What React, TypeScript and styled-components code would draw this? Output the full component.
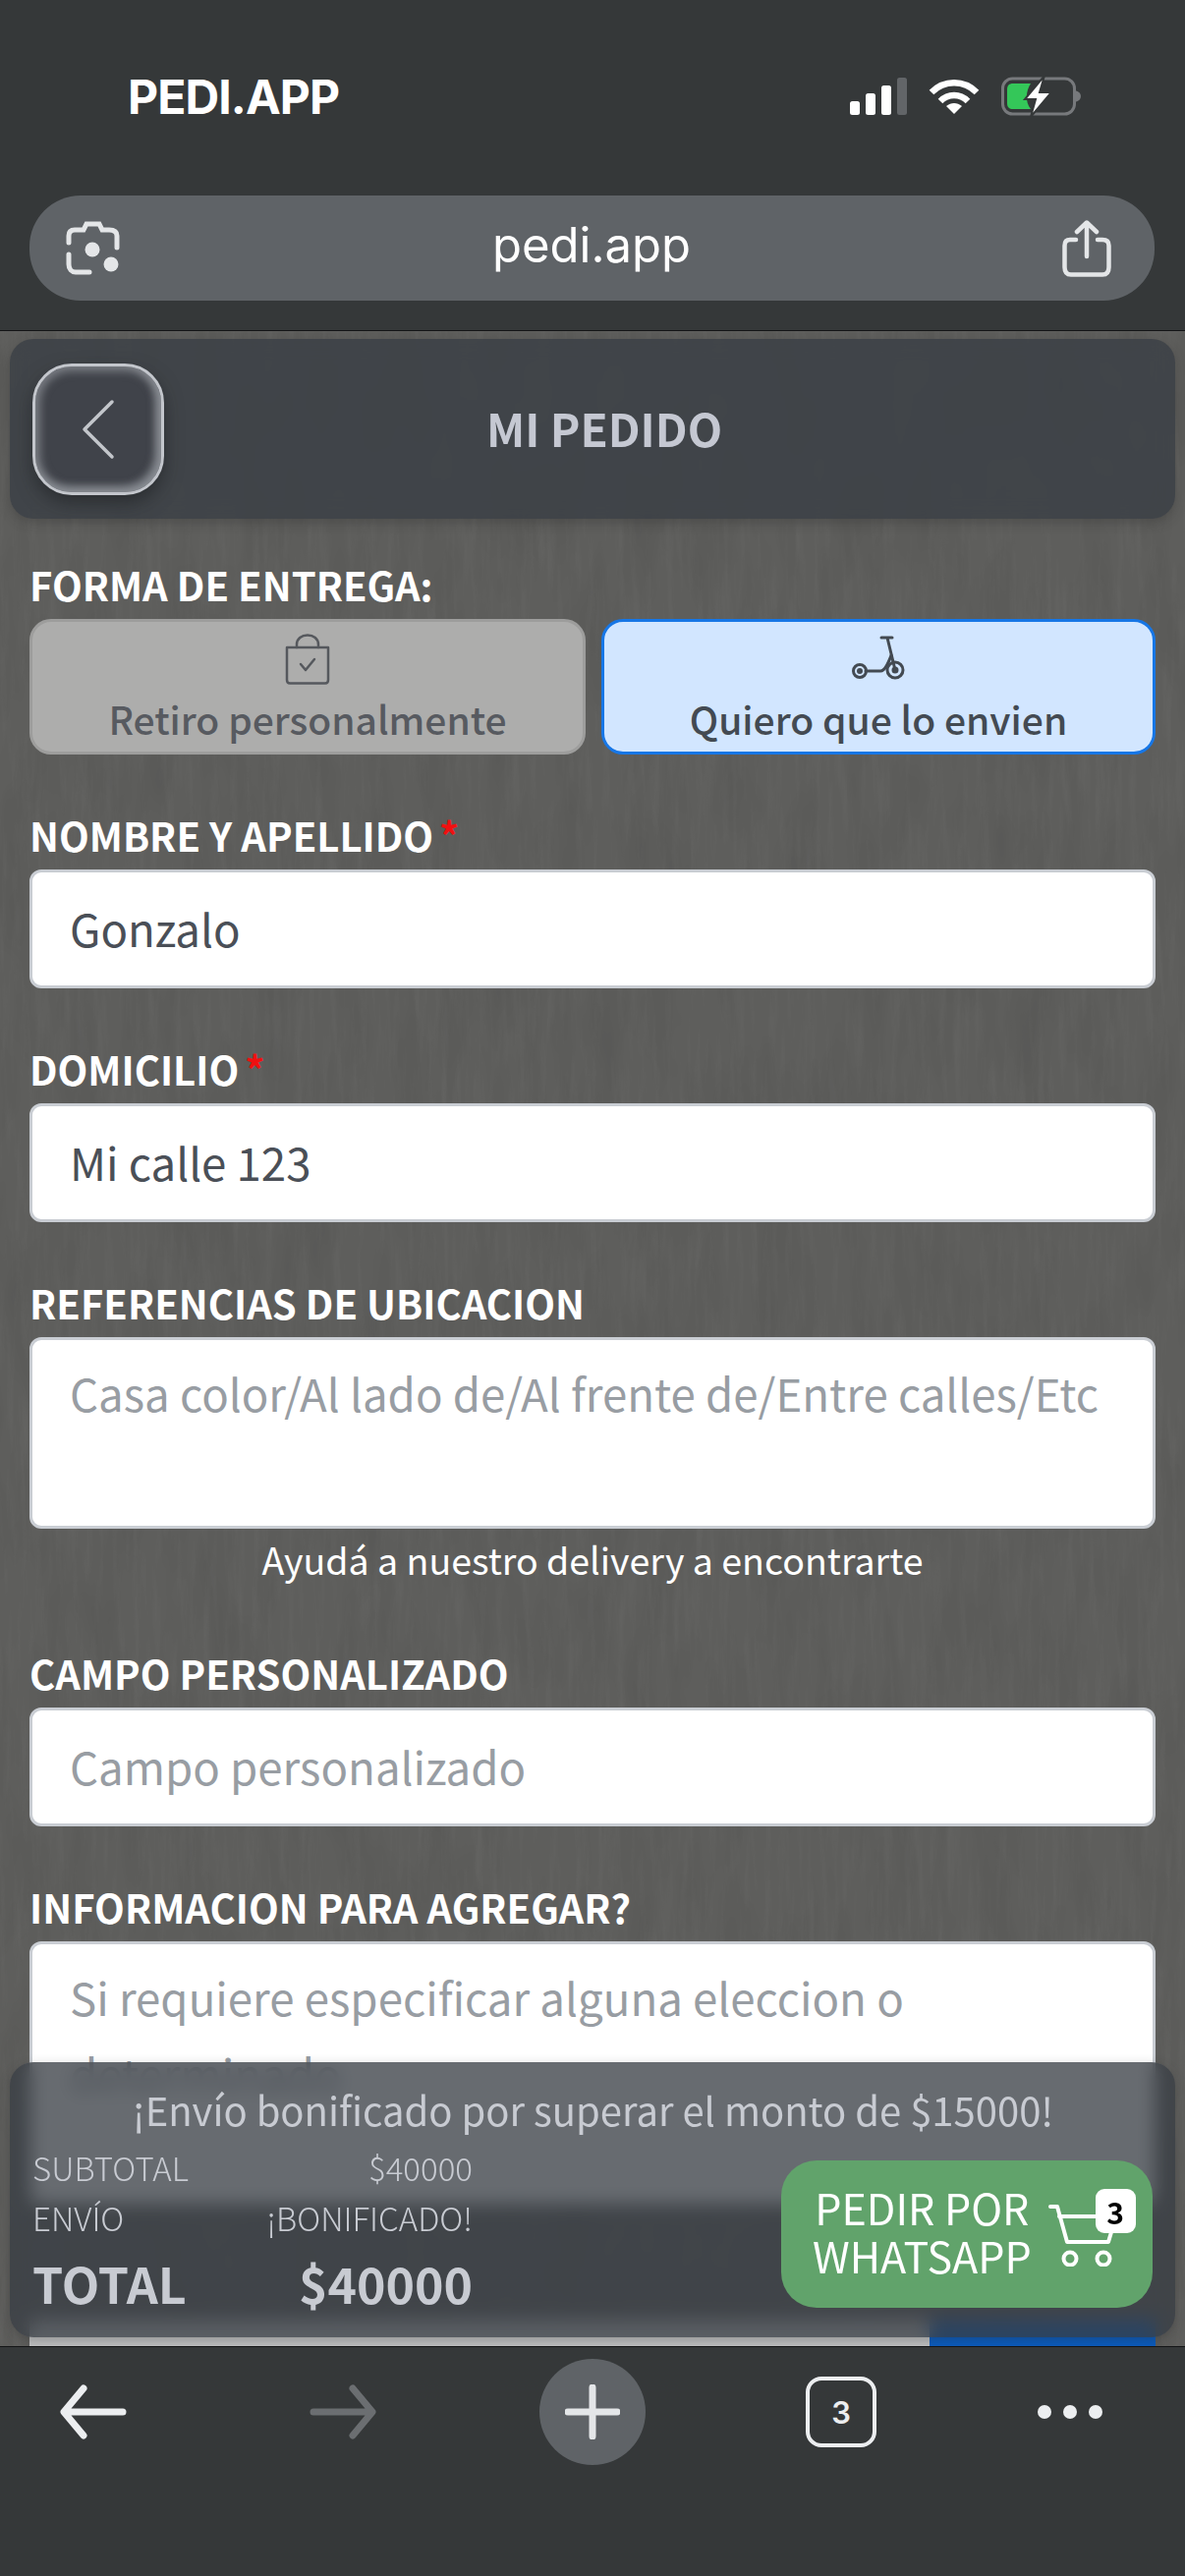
import styled, { createGlobalStyle } from 'styled-components';

const sans = `"Noto Sans CJK SC", "Noto Sans", sans-serif`;
const system = `Inter, "Liberation Sans", sans-serif`;

const GlobalStyle = createGlobalStyle`
  html, body {
    margin: 0;
    padding: 0;
    background: #353839;
  }
  * {
    box-sizing: border-box;
  }
`;

const Screen = styled.div`
  width: 1206px;
  height: 2622px;
  display: flex;
  flex-direction: column;
  overflow: hidden;
  font-family: ${sans};
  background: #353839;
`;

const TopChrome = styled.header`
  height: 337px;
  flex: none;
  padding: 70px 31px 0 30px;
  background: #353839;
  border-bottom: 1px solid #141516;
`;

const StatusBar = styled.div`
  display: flex;
  align-items: center;
  justify-content: space-between;
  height: 56px;
  padding: 0 72px 0 100px;
  margin-bottom: 73px;
`;

const Carrier = styled.span`
  font-family: ${system};
  font-size: 48px;
  font-weight: 700;
  letter-spacing: -0.9px;
  color: #fff;
`;

const StatusIcons = styled.div`
  display: flex;
  align-items: center;
  gap: 22px;
`;

const AddressBar = styled.div`
  height: 107px;
  display: flex;
  align-items: center;
  justify-content: space-between;
  padding: 0 44px 0 37px;
  border-radius: 52px;
  background: #5f6367;
`;

const Url = styled.span`
  font-family: ${system};
  font-size: 49px;
  font-weight: 400;
  line-height: 100px;
  padding-bottom: 6px;
  color: #fff;
`;

const Main = styled.main`
  position: relative;
  isolation: isolate;
  flex: 1;
  min-height: 0;
  overflow: hidden;
  padding: 8px 10px 0;
  background-color: #5e5e5c;
`;

const Texture = styled.svg`
  position: absolute;
  inset: 0;
  z-index: -1;
  width: 100%;
  height: 100%;
`;

const GlassPanel = styled.div`
  border-radius: 24px;
  background: rgba(55, 60, 67, 0.76);
  backdrop-filter: blur(9px);
  box-shadow: 0 4px 12px rgba(40, 40, 40, 0.3);
`;

const Header = styled(GlassPanel)`
  height: 183px;
  display: flex;
  align-items: center;
  padding-left: 23px;
`;

const BackButton = styled.button`
  width: 134px;
  height: 134px;
  flex: none;
  display: flex;
  align-items: center;
  justify-content: center;
  padding: 0;
  border: 3px solid #c3c6cc;
  border-radius: 40px;
  background: #40434a;
  box-shadow:
    inset 0 0 9px 5px rgba(176, 180, 186, 0.5),
    inset -5px -5px 8px 1px rgba(176, 180, 186, 0.35),
    0 8px 18px rgba(24, 26, 28, 0.5);
`;

const Title = styled.h1`
  flex: 1;
  margin: 0 0 3px;
  padding-right: 133px;
  text-align: center;
  font-size: 46px;
  font-weight: 700;
  color: #c5c8d2;
`;

const Form = styled.form`
  display: flex;
  flex-direction: column;
  gap: 62px;
  margin: 47px 20px 0;
`;

const Field = styled.div`
  display: flex;
  flex-direction: column;
`;

const Label = styled.label`
  height: 44px;
  margin-bottom: 11px;
  font-size: 40px;
  line-height: 41px;
  font-weight: 700;
  color: #fff;
`;

const Required = styled.span`
  margin-left: 6px;
  color: #f01010;
`;

const ToggleRow = styled.div`
  display: grid;
  grid-template-columns: 566px 564px;
  gap: 16px;
`;

const Toggle = styled.button<{ $active?: boolean }>`
  height: 138px;
  display: flex;
  flex-direction: column;
  align-items: center;
  padding: 11px 0 0;
  border-radius: 22px;
  border: ${p => (p.$active ? '3px solid #1676e6' : '3px solid #9d9d9c')};
  background: ${p => (p.$active ? '#d2e6ff' : '#adadac')};
  color: ${p => (p.$active ? '#434a52' : '#575a60')};
  font-family: ${sans};
  font-size: 39px;
  line-height: 50px;
  font-weight: 500;
`;

const ToggleIcon = styled.span<{ $offset: number }>`
  display: block;
  height: 54px;
  margin-bottom: 8px;
  padding-top: ${p => p.$offset}px;
`;

const controlStyles = `
  display: block;
  width: 100%;
  padding: 0 38px;
  border: 3px solid #c9cdd3;
  border-radius: 12px;
  background: #fff;
  color: #4a4f57;
  font-family: ${sans};
  font-size: 45.6px;
  outline: none;
`;

const TextInput = styled.input`
  ${controlStyles}
  height: 121px;
  padding-bottom: 4px;
  &::placeholder {
    color: #989da3;
    opacity: 1;
  }
`;

const TextArea = styled.textarea<{ $tall?: boolean }>`
  ${controlStyles}
  height: ${p => (p.$tall ? '268px' : '195px')};
  padding-top: 14px;
  line-height: 78px;
  resize: none;
  overflow: hidden;
  &::placeholder {
    color: #989da3;
    opacity: 1;
  }
`;

const Hint = styled.p`
  margin: 9px 0 12px;
  text-align: center;
  font-size: 37.5px;
  line-height: 44px;
  color: #fff;
`;

const SubmitRow = styled.div`
  display: grid;
  grid-template-columns: 916px 230px;
  height: 60px;
  margin-top: 55px;
`;

const SubmitPart = styled.div<{ $color: string }>`
  background: ${p => p.$color};
`;

const Summary = styled(GlassPanel)`
  position: absolute;
  left: 10px;
  right: 10px;
  bottom: 9px;
  height: 280px;
  padding: 23px 23px 0 24px;
`;

const Notice = styled.p`
  margin: 0 0 9px;
  text-align: center;
  font-size: 40px;
  line-height: 50px;
  color: #c8cbd2;
`;

const SummaryBody = styled.div`
  display: flex;
  align-items: flex-start;
  justify-content: space-between;
`;

const Totals = styled.div`
  width: 448px;
  margin-left: -1px;
  display: flex;
  flex-direction: column;
`;

const TotalRow = styled.div<{ $strong?: boolean }>`
  display: flex;
  justify-content: space-between;
  height: ${p => (p.$strong ? '74px' : '51px')};
  margin-top: ${p => (p.$strong ? '3px' : '0')};
  font-size: ${p => (p.$strong ? '50px' : '33px')};
  line-height: ${p => (p.$strong ? '74px' : '50px')};
  font-weight: ${p => (p.$strong ? 700 : 300)};
  color: #c8cbd2;
`;

const OrderButton = styled.button`
  width: 378px;
  height: 150px;
  margin-top: 18px;
  display: flex;
  align-items: center;
  gap: 17px;
  padding: 0 0 0 32px;
  border: none;
  border-radius: 36px;
  background: #61a36b;
  color: #fff;
  font-family: ${sans};
  text-align: center;
`;

const OrderText = styled.span`
  margin-top: -6px;
  font-size: 43px;
  line-height: 49px;
  font-weight: 400;
`;

const CartWrap = styled.span`
  position: relative;
  display: block;
  width: 72px;
  height: 64px;
  margin-top: 2px;
`;

const CartBadge = styled.span`
  position: absolute;
  top: -15px;
  right: -17px;
  width: 41px;
  height: 45px;
  display: flex;
  align-items: center;
  justify-content: center;
  border-radius: 9px;
  background: #fff;
  color: #000;
  font-size: 30px;
  font-weight: 700;
`;

const BottomChrome = styled.nav`
  height: 234px;
  flex: none;
  display: grid;
  grid-template-columns: 190px 318px 190px 316px 150px;
  grid-auto-rows: 108px;
  align-items: center;
  justify-items: center;
  padding-top: 12px;
  background: #353839;
  border-top: 1px solid #141516;
`;

const NewTab = styled.span`
  width: 108px;
  height: 108px;
  display: flex;
  align-items: center;
  justify-content: center;
  border-radius: 50%;
  background: #5f6367;
`;

const TabCount = styled.span`
  width: 72px;
  height: 72px;
  display: flex;
  align-items: center;
  justify-content: center;
  border: 4px solid #eceef0;
  border-radius: 16px;
  color: #eceef0;
  font-family: ${system};
  font-size: 31px;
  font-weight: 600;
`;

const ConcreteTexture = () => (
  <Texture aria-hidden="true">
    <defs>
      <filter id="streaks-light" x="0" y="0" width="100%" height="100%">
        <feTurbulence type="fractalNoise" baseFrequency="0.14 0.012" numOctaves="4" seed="7" />
        <feColorMatrix type="matrix" values="0 0 0 0 1  0 0 0 0 1  0 0 0 0 1  1.1 0 0 0 -0.5" />
      </filter>
      <filter id="streaks-dark" x="0" y="0" width="100%" height="100%">
        <feTurbulence type="fractalNoise" baseFrequency="0.03 0.008" numOctaves="3" seed="21" />
        <feColorMatrix type="matrix" values="0 0 0 0 0  0 0 0 0 0  0 0 0 0 0  1.4 0 0 0 -0.6" />
      </filter>
    </defs>
    <rect width="100%" height="100%" filter="url(#streaks-light)" opacity="0.06" />
    <rect width="100%" height="100%" filter="url(#streaks-dark)" opacity="0.08" />
  </Texture>
);

const Signal = () => (
  <svg width="58" height="38" viewBox="0 0 58 38" fill="#fff">
    <rect x="0" y="24" width="10" height="14" rx="2.5" />
    <rect x="16" y="16" width="10" height="22" rx="2.5" />
    <rect x="32" y="8" width="10" height="30" rx="2.5" />
    <rect x="48" y="0" width="10" height="38" rx="2.5" fill="#626568" />
  </svg>
);

const Wifi = () => (
  <svg width="52" height="38" viewBox="0 0 52 38" fill="none" stroke="#fff" strokeWidth="6.5">
    <path d="M3 15 C16 2 36 2 49 15" />
    <path d="M12 24 C20 16 32 16 40 24" />
    <path d="M18 29 L26 37 L34 29 C29 25 23 25 18 29Z" fill="#fff" stroke="none" />
  </svg>
);

const Battery = () => (
  <svg width="84" height="42" viewBox="0 0 84 42">
    <rect x="1.5" y="3" width="73" height="36" rx="10" fill="none" stroke="#77797c" strokeWidth="3" />
    <path d="M75 15 C79 16 81 18 81 21 C81 24 79 26 75 27Z" fill="#77797c" />
    <path d="M6 14 C6 10 8 8 12 8 H30 C25 16 24 26 30 34 H12 C8 34 6 32 6 28Z" fill="#34c759" />
    <path d="M44 0 L24 24 H35 L30 42 L51 17 H39Z" fill="#fff" stroke="#353839" strokeWidth="2" />
  </svg>
);

const LensIcon = () => (
  <svg width="56" height="56" viewBox="0 0 56 56" fill="none" stroke="#e4e6e8" strokeWidth="5" strokeLinecap="round">
    <path d="M3 22 V15 C3 11 5 9 9 9 H18 L21 3 H34 L37 9 H44 C49 9 52 11 52 15 V27" />
    <path d="M3 34 V44 C3 49 6 52 10 52 H24" />
    <circle cx="27" cy="29" r="7.5" fill="#e4e6e8" stroke="none" />
    <circle cx="46" cy="44" r="7.5" fill="#e4e6e8" stroke="none" />
  </svg>
);

const ShareIcon = () => (
  <svg width="50" height="58" viewBox="0 0 50 58" fill="none" stroke="#e4e6e8" strokeWidth="4.5" strokeLinecap="round" strokeLinejoin="round">
    <path d="M14 20 H8 C4 20 2.500 22 2.500 26 V48 C2.500 53 5 55.500 9 55.500 H41 C45 55.500 47.500 53 47.500 48 V26 C47.500 22 45 20 41 20 H36" />
    <path d="M25 37 V3 M15 12 L25 2.500 L35 12" />
  </svg>
);

const Chevron = () => (
  <svg width="34" height="62" viewBox="0 0 34 62" fill="none" stroke="#c3c6cb" strokeWidth="3.500" strokeLinecap="round" strokeLinejoin="round">
    <path d="M31 3 L3 31 L31 59" />
  </svg>
);

const BagIcon = () => (
  <svg width="46" height="52" viewBox="0 0 46 52" fill="none" stroke="#55585d" strokeWidth="2.500" strokeLinejoin="round" strokeLinecap="round">
    <path d="M2 14 H44 V47 C44 49.500 43 50.500 41 50.500 H5 C3 50.500 2 49.500 2 47Z" />
    <path d="M12 14 V11 C12 5 17 1.500 23 1.500 C29 1.500 34 5 34 11 V14" />
    <path d="M16 31 L21 37 L30 26" />
  </svg>
);

const ScooterIcon = () => (
  <svg width="54" height="46" viewBox="0 0 54 46" fill="none" stroke="#434a52" strokeWidth="3" strokeLinecap="round" strokeLinejoin="round">
    <path d="M30 2 H41 M36 2 L44 35" />
    <circle cx="8" cy="36" r="6.500" />
    <circle cx="8" cy="36" r="1.500" />
    <circle cx="44" cy="35" r="8" />
    <circle cx="44" cy="35" r="2" />
    <path d="M14 36 H29 C34 36 37 28 40 20" />
  </svg>
);

const CartIcon = () => (
  <svg width="72" height="64" viewBox="0 0 72 64" fill="none" stroke="#fff" strokeWidth="4" strokeLinecap="round" strokeLinejoin="round">
    <path d="M2 3 H9 L19 39 H61 L64 29" />
    <path d="M11 13 H51" />
    <circle cx="22" cy="56" r="6.500" />
    <circle cx="56" cy="56" r="6.500" />
  </svg>
);

const ArrowIcon = ({ color, flip }: { color: string; flip?: boolean }) => (
  <svg width="68" height="56" viewBox="0 0 68 56" fill="none" stroke={color} strokeWidth="7" strokeLinecap="round" strokeLinejoin="round" transform={flip ? 'scale(-1 1)' : undefined}>
    <path d="M64 28 H5 M24 4 L4 28 L24 52" />
  </svg>
);

const PlusIcon = () => (
  <svg width="56" height="56" viewBox="0 0 56 56" stroke="#e4e6e8" strokeWidth="7" strokeLinecap="round">
    <path d="M28 3 V53 M3 28 H53" />
  </svg>
);

const DotsIcon = () => (
  <svg width="68" height="16" viewBox="0 0 68 16" fill="#eceef0">
    <circle cx="8" cy="8" r="7" />
    <circle cx="34" cy="8" r="7" />
    <circle cx="60" cy="8" r="7" />
  </svg>
);

export default function App() {
  return (
    <Screen>
      <GlobalStyle />
      <TopChrome>
        <StatusBar>
          <Carrier>PEDI.APP</Carrier>
          <StatusIcons>
            <Signal />
            <Wifi />
            <Battery />
          </StatusIcons>
        </StatusBar>
        <AddressBar>
          <LensIcon />
          <Url>pedi.app</Url>
          <ShareIcon />
        </AddressBar>
      </TopChrome>

      <Main>
        <ConcreteTexture />
        <Header>
          <BackButton type="button" aria-label="Volver">
            <Chevron />
          </BackButton>
          <Title>MI PEDIDO</Title>
        </Header>

        <Form>
          <Field>
            <Label>FORMA DE ENTREGA:</Label>
            <ToggleRow>
              <Toggle type="button">
                <ToggleIcon $offset={1}><BagIcon /></ToggleIcon>
                Retiro personalmente
              </Toggle>
              <Toggle type="button" $active>
                <ToggleIcon $offset={3}><ScooterIcon /></ToggleIcon>
                Quiero que lo envien
              </Toggle>
            </ToggleRow>
          </Field>

          <Field>
            <Label>NOMBRE Y APELLIDO<Required>*</Required></Label>
            <TextInput readOnly defaultValue="Gonzalo" />
          </Field>

          <Field>
            <Label>DOMICILIO<Required>*</Required></Label>
            <TextInput readOnly defaultValue="Mi calle 123" />
          </Field>

          <Field>
            <Label>REFERENCIAS DE UBICACION</Label>
            <TextArea readOnly placeholder="Casa color/Al lado de/Al frente de/Entre calles/Etc" />
            <Hint>Ayudá a nuestro delivery a encontrarte</Hint>
          </Field>

          <Field>
            <Label>CAMPO PERSONALIZADO</Label>
            <TextInput readOnly placeholder="Campo personalizado" />
          </Field>

          <Field>
            <Label>INFORMACION PARA AGREGAR?</Label>
            <TextArea $tall readOnly placeholder="Si requiere especificar alguna eleccion o determinado" />
          </Field>

          <SubmitRow>
            <SubmitPart $color="#c3c4c5" />
            <SubmitPart $color="#0a5cc0" />
          </SubmitRow>
        </Form>

        <Summary>
          <Notice>¡Envío bonificado por superar el monto de $15000!</Notice>
          <SummaryBody>
            <Totals>
              <TotalRow><span>SUBTOTAL</span><span>$40000</span></TotalRow>
              <TotalRow><span>ENVÍO</span><span>¡BONIFICADO!</span></TotalRow>
              <TotalRow $strong><span>TOTAL</span><span>$40000</span></TotalRow>
            </Totals>
            <OrderButton type="button">
              <OrderText>PEDIR POR<br />WHATSAPP</OrderText>
              <CartWrap>
                <CartIcon />
                <CartBadge>3</CartBadge>
              </CartWrap>
            </OrderButton>
          </SummaryBody>
        </Summary>
      </Main>

      <BottomChrome>
        <ArrowIcon color="#eceef0" />
        <ArrowIcon color="#6b6e71" flip />
        <NewTab><PlusIcon /></NewTab>
        <TabCount>3</TabCount>
        <DotsIcon />
      </BottomChrome>
    </Screen>
  );
}
